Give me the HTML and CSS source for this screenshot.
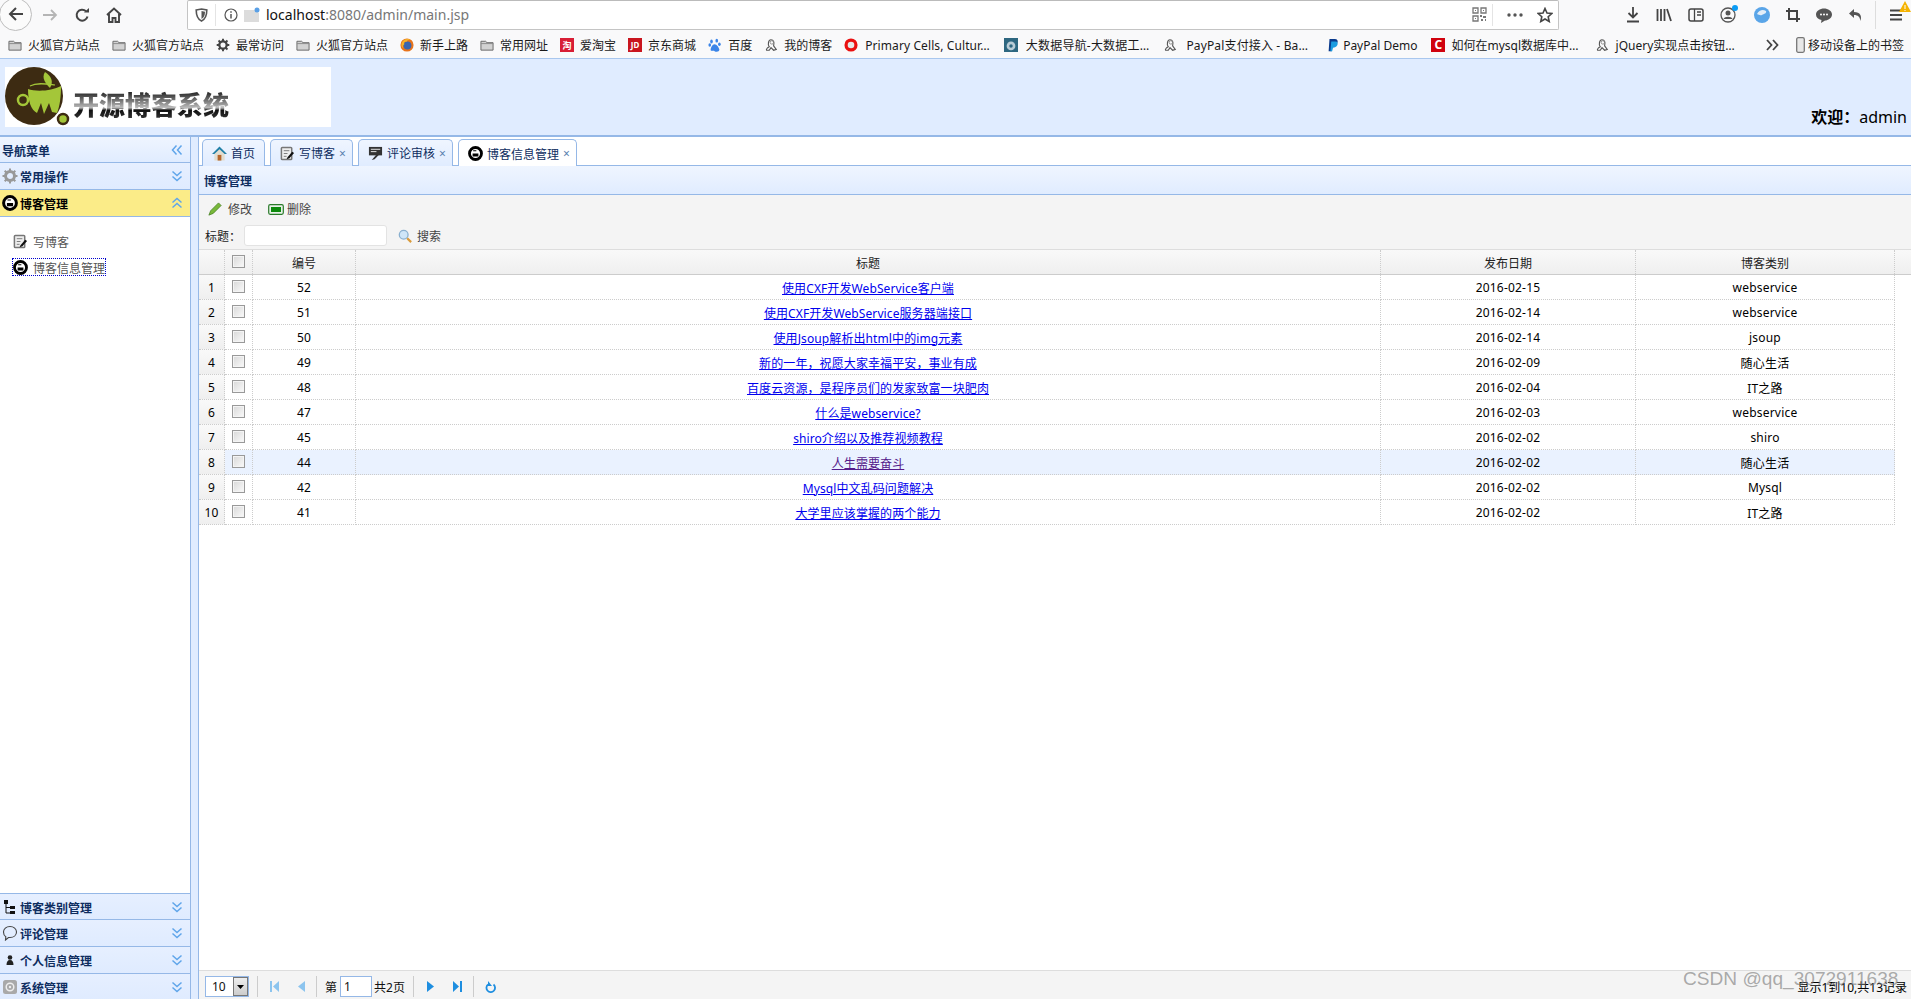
FILE: index.html
```html
<!DOCTYPE html>
<html lang="zh-CN">
<head>
<meta charset="utf-8">
<title>开源博客系统</title>
<link rel="stylesheet" href="styles.css">
</head>
<body>
<svg class="defs" width="0" height="0" aria-hidden="true">
  <symbol id="i-folder" viewBox="0 0 15 13"><path d="M1 2.500h5l1.500 1.500H14v8H1z" fill="#d2d2d2" stroke="#666"/><path d="M1 5h13" stroke="#888"/></symbol>
  <symbol id="i-gear" viewBox="0 0 16 16"><circle cx="8" cy="8" r="4.200" fill="none" stroke="#444" stroke-width="2.600"/><path d="M8 .8v3M8 12.200v3M.8 8h3M12.200 8h3M2.900 2.900l2.100 2.100M11 11l2.100 2.100M13.100 2.900L11 5M5 11l-2.100 2.100" stroke="#444" stroke-width="2.200"/></symbol>
  <symbol id="i-persona" viewBox="0 0 16 16"><path d="M3 14c-1-1 1-3 3-4C4 7 5 2 8 2c3 0 4 3 3 7l3 4-3 1-3-3-2 3z" fill="none" stroke="#555" stroke-width="1.300"/><circle cx="9" cy="5" r="2" fill="none" stroke="#888"/></symbol>
  <symbol id="i-blog" viewBox="0 0 16 16"><circle cx="8" cy="8" r="6.400" fill="#fff" stroke="#000" stroke-width="3"/><path d="M5.500 5h3.400M5.500 8.500h5v2.200h-5z" fill="#000" stroke="#000" stroke-width="1.200"/></symbol>
  <symbol id="i-write" viewBox="0 0 16 16"><rect x="1.500" y="1.500" width="11" height="13" rx="1" fill="#eee" stroke="#777" stroke-width="1.600"/><path d="M4 5h6M4 8h4M4 11h3" stroke="#777"/><path d="M8 12l5-6 2 1.500-5 5.500-3 1z" fill="#111"/></symbol>
  <symbol id="i-chev-d" viewBox="0 0 12 12"><path d="M1.500 1.500L6 5.500l4.500-4M1.500 6.500L6 10.500l4.500-4" fill="none" stroke="#5fa5ea" stroke-width="1.500"/></symbol>
  <symbol id="i-chev-u" viewBox="0 0 12 12"><path d="M1.500 5.500L6 1.500l4.500 4M1.500 10.500L6 6.500l4.500 4" fill="none" stroke="#5fa5ea" stroke-width="1.500"/></symbol>
  <symbol id="i-chev-l" viewBox="0 0 12 12"><path d="M5.500 1.500L1.500 6l4 4.500M10.500 1.500L6.500 6l4 4.500" fill="none" stroke="#5fa5ea" stroke-width="1.500"/></symbol>
</svg>

<div class="nav">
  <span class="back"><svg width="18" height="18" viewBox="0 0 18 18"><path d="M16 9H3M9 3L3 9l6 6" fill="none" stroke="#444" stroke-width="2"/></svg></span>
  <svg class="fwd" width="16" height="16" viewBox="0 0 16 16"><path d="M1 8h13M9 3l5 5-5 5" fill="none" stroke="#b5b5b5" stroke-width="1.800"/></svg>
  <svg class="reload" width="15" height="15" viewBox="0 0 15 15"><path d="M12.500 8.500A5.500 5.500 0 1 1 11 3.200" fill="none" stroke="#444" stroke-width="2"/><path d="M9 4.500h5V0z" fill="#444"/></svg>
  <svg class="home" width="16" height="16" viewBox="0 0 16 16"><path d="M1 8l7-6.500L15 8M3 7v8h3.500v-4h3v4H13V7" fill="none" stroke="#444" stroke-width="1.900"/></svg>
  <div class="urlbar">
    <svg class="u-shield" width="13" height="14" viewBox="0 0 13 14"><path d="M1.200 2l5.300-1 5.300 1c0 5-1 9-5.300 11C2.200 11 1.200 7 1.200 2z" fill="none" stroke="#555" stroke-width="1.600"/><path d="M6.500 3l3.500.7c0 3.500-1 5.800-3.500 7.200z" fill="#555"/></svg>
    <span class="u-div"></span>
    <svg class="u-info" width="14" height="14" viewBox="0 0 14 14"><circle cx="7" cy="7" r="6" fill="none" stroke="#555" stroke-width="1.200"/><path d="M7 6v4.500M7 3.300v1.500" stroke="#555" stroke-width="1.500"/></svg>
    <svg class="u-page" width="16" height="16" viewBox="0 0 16 16"><path d="M0 3h11l4 3v9H0z" fill="#dcdcdc"/><circle cx="13" cy="3" r="2.500" fill="#5aa0e6"/></svg>
    <span class="url"><b class="host">localhost</b>:8080/admin/main.jsp</span>
    <svg class="u-qr" width="15" height="15" viewBox="0 0 15 15"><path d="M1 1h5v5H1zM9 1h5v5H9zM1 9h5v5H1z" fill="none" stroke="#777" stroke-width="1.300"/><path d="M3 3h1v1H3zM11 3h1v1h-1zM3 11h1v1H3zM8 8h2v2H8zM11 9h3v2h-3zM9 12h2v2H9zM13 12h1v2h-1z" fill="#777"/></svg>
    <span class="u-div u-div2"></span>
    <svg class="u-dots" width="16" height="4" viewBox="0 0 16 4"><circle cx="2" cy="2" r="1.700" fill="#555"/><circle cx="8" cy="2" r="1.700" fill="#555"/><circle cx="14" cy="2" r="1.700" fill="#555"/></svg>
    <svg class="u-star" width="16" height="16" viewBox="0 0 16 16"><path d="M8 1.500l2 4.500 4.800.5-3.600 3.200 1 4.800L8 12l-4.200 2.500 1-4.800L1.200 6.500 6 6z" fill="none" stroke="#444" stroke-width="1.600"/></svg>
  </div>
  <div class="tools">
    <svg width="14" height="16" viewBox="0 0 14 16"><path d="M7 0v10M2.500 6L7 10.500 11.500 6M1 14.500h12" fill="none" stroke="#444" stroke-width="1.800"/></svg>
    <svg width="16" height="14" viewBox="0 0 16 14"><path d="M1.500 1v12M5 1v12M8.500 1v12M11 1l4 12" fill="none" stroke="#444" stroke-width="1.800"/></svg>
    <svg width="16" height="14" viewBox="0 0 16 14"><rect x="1" y="1" width="14" height="12" rx="2" fill="none" stroke="#444" stroke-width="1.500"/><path d="M6.500 1v12M9 4h4M9 7h4" stroke="#444" stroke-width="1.300"/></svg>
    <svg class="t-acc" width="18" height="18" viewBox="0 0 18 18"><circle cx="8" cy="10" r="7" fill="none" stroke="#555" stroke-width="1.300"/><circle cx="8" cy="8" r="2.500" fill="#555"/><path d="M3.500 14c1-3 8-3 9 0" fill="#555"/><circle cx="15" cy="3" r="3" fill="#0a9cf5"/></svg>
    <svg width="16" height="16" viewBox="0 0 16 16"><circle cx="8" cy="8" r="8" fill="#5aa5e8"/><path d="M3 7c2-4 6-5 9-3 1 2-2 3-4 4-2 .5-3 0-5-1z" fill="#e4eef8"/></svg>
    <svg width="14" height="14" viewBox="0 0 14 14"><path d="M3 0v11h11M0 3h11v11" fill="none" stroke="#444" stroke-width="2"/></svg>
    <svg width="16" height="15" viewBox="0 0 16 15"><path d="M8 .5c4 0 8 2.500 8 6s-4 6-7 6l-4 2.500 .5-3C2 11 0 9.500 0 6.500 0 3 4 .5 8 .5z" fill="#555"/><circle cx="5" cy="6.500" r="1" fill="#fff"/><circle cx="8" cy="6.500" r="1" fill="#fff"/><circle cx="11" cy="6.500" r="1" fill="#fff"/></svg>
    <svg width="15" height="15" viewBox="0 0 15 15"><path d="M6 1L1 5.500 6 10V7c4 0 6 2 6.500 6 1.500-5 0-9-6.500-9z" fill="#555"/></svg>
    <span class="t-div"></span>
    <span class="menu">
      <svg width="12" height="12" viewBox="0 0 12 12"><path d="M0 1.500h12M0 6h12M0 10.500h12" stroke="#444" stroke-width="1.800"/></svg>
      <svg class="warn" width="12" height="12" viewBox="0 0 12 12"><path d="M6 0l6 11H0z" fill="#f5b301"/><path d="M6 4v4M6 9v1" stroke="#fff"/></svg>
    </span>
  </div>
</div>

<div class="bookmarks">
  <span class="bm"><svg class="ic"><use href="#i-folder"/></svg>火狐官方站点</span>
  <span class="bm"><svg class="ic"><use href="#i-folder"/></svg>火狐官方站点</span>
  <span class="bm"><svg class="ic"><use href="#i-gear"/></svg>最常访问</span>
  <span class="bm"><svg class="ic"><use href="#i-folder"/></svg>火狐官方站点</span>
  <span class="bm"><svg class="ic" viewBox="0 0 16 16"><circle cx="8" cy="8" r="7.500" fill="#e8741c"/><circle cx="8.500" cy="8.500" r="4.500" fill="#3a66b0"/><path d="M2 6C3 2 8 0 12 2c-3 0-4 1-4 2-3 0-4 1-3 3-2 1-2 3-1 5C2 11 1 8 2 6z" fill="#f6b32a"/></svg>新手上路</span>
  <span class="bm"><svg class="ic"><use href="#i-folder"/></svg>常用网址</span>
  <span class="bm"><span class="sq sq-tao">淘</span>爱淘宝</span>
  <span class="bm"><span class="sq sq-jd">JD</span>京东商城</span>
  <span class="bm"><svg class="ic" viewBox="0 0 16 16"><g fill="#3a84e8"><ellipse cx="4" cy="4" rx="1.500" ry="2.200"/><ellipse cx="10" cy="3" rx="1.500" ry="2.200"/><ellipse cx="2" cy="8" rx="1.500" ry="2"/><ellipse cx="13" cy="7" rx="1.500" ry="2"/><path d="M7.500 7C10 7 13 11 13 13.500S9 16 7.500 15 3 16 3 13.500 5 7 7.500 7z"/></g></svg>百度</span>
  <span class="bm"><svg class="ic"><use href="#i-persona"/></svg>我的博客</span>
  <span class="bm bm-a"><svg class="ic" viewBox="0 0 16 16"><circle cx="8" cy="8" r="7.500" fill="#ea1010"/><circle cx="8" cy="8" r="3.800" fill="#e8e8e8"/></svg>Primary Cells, Cultur…</span>
  <span class="bm bm-b"><svg class="ic" viewBox="0 0 16 16"><rect width="16" height="16" fill="#2e6780"/><circle cx="8" cy="9" r="5" fill="#b9ccd6"/><circle cx="8" cy="9" r="2" fill="#2e6780"/></svg>大数据导航-大数据工…</span>
  <span class="bm bm-c"><svg class="ic"><use href="#i-persona"/></svg>PayPal支付接入 - Ba…</span>
  <span class="bm bm-d"><svg class="ic" viewBox="0 0 16 16"><path d="M4 1h6c3 0 4 2 3 4.500S9 8.500 7.500 8.500L6.500 15H3z" fill="#0a3a8c"/><path d="M6 4h5c2 0 3 2 2 4s-3 3-5 3l-1 4H5z" fill="#1a9ce0"/></svg>PayPal Demo</span>
  <span class="bm bm-e"><span class="sq sq-c">C</span>如何在mysql数据库中…</span>
  <span class="bm bm-f"><svg class="ic"><use href="#i-persona"/></svg>jQuery实现点击按钮…</span>
  <span class="bm-end">
    <svg class="more" width="13" height="12" viewBox="0 0 13 12"><path d="M1 1l4.500 5L1 11M7 1l4.500 5L7 11" fill="none" stroke="#444" stroke-width="1.800"/></svg>
    <span class="bm bm-phone"><svg class="phone" width="9" height="16" viewBox="0 0 9 16"><rect x=".7" y=".7" width="7.600" height="14.600" rx="1.500" fill="#e8e8e8" stroke="#777" stroke-width="1.300"/></svg>移动设备上的书签</span>
  </span>
</div>

<header class="top">
  <div class="logo">
    <svg class="logo-mark" width="66" height="60" viewBox="0 0 66 60">
      <circle cx="29" cy="29" r="29" fill="#3d2b12"/>
      <circle cx="58" cy="52" r="5" fill="#a4c639" stroke="#3d2b12" stroke-width="2.500"/>
      <path d="M23 22c8 3 24 2 33-3 0 10-1 20-4 27l-5-1-3-9-5 11-3-11-4 10c-6-3-9-12-9-24z" fill="#a4c639"/>
      <path d="M25 19c7-4 17-2 25-1" fill="none" stroke="#a4c639" stroke-width="1.200"/>
      <circle cx="18" cy="33" r="5" fill="none" stroke="#a4c639" stroke-width="2.500"/>
      <path d="M40 5c6 4 9 9 5 16-4-4-9-10-5-16z" fill="#a4c639"/>
    </svg>
    <span class="logo-text">开源博客系统</span>
  </div>
  <div class="welcome"><strong>欢迎：</strong>admin</div>
</header>

<div class="layout">
  <aside class="west">
    <div class="acc acc-title"><span class="acc-t">导航菜单</span><svg class="chev"><use href="#i-chev-l"/></svg></div>
    <div class="acc"><svg class="acc-i" viewBox="0 0 16 16"><circle cx="8" cy="8" r="4.500" fill="none" stroke="#999" stroke-width="3"/><path d="M8 .5v3M8 12.500v3M.5 8h3M12.500 8h3M2.700 2.700l2 2M11.300 11.300l2 2M13.300 2.700l-2 2M4.700 11.300l-2 2" stroke="#999" stroke-width="2"/></svg><span class="acc-t">常用操作</span><svg class="chev"><use href="#i-chev-d"/></svg></div>
    <div class="acc acc-on"><svg class="acc-i"><use href="#i-blog"/></svg><span class="acc-t">博客管理</span><svg class="chev"><use href="#i-chev-u"/></svg></div>
    <div class="acc-body">
      <div class="link"><svg class="link-i"><use href="#i-write"/></svg>写博客</div>
      <div class="link link-on"><svg class="link-i"><use href="#i-blog"/></svg>博客信息管理</div>
    </div>
    <div class="acc acc-first"><svg class="acc-i" viewBox="0 0 16 16"><path d="M2 1h4v4H2zM8 7h5v3H8zM8 12h5v3H8z" fill="#111"/><path d="M4 5v9h4M4 8.500h4" stroke="#111" fill="none"/></svg><span class="acc-t">博客类别管理</span><svg class="chev"><use href="#i-chev-d"/></svg></div>
    <div class="acc"><svg class="acc-i" viewBox="0 0 16 16"><path d="M8 1.500c3.800 0 6.500 2.300 6.500 5.500S11.800 12.500 8 12.500H6.500L3.500 15l.3-3.300C2 10.700 1.500 9 1.500 7 1.500 3.800 4.200 1.500 8 1.500z" fill="none" stroke="#444" stroke-width="1.100"/></svg><span class="acc-t">评论管理</span><svg class="chev"><use href="#i-chev-d"/></svg></div>
    <div class="acc"><svg class="acc-i" viewBox="0 0 16 16"><circle cx="8" cy="5.500" r="2.300" fill="#222"/><path d="M4.500 13c0-3 1-5 3.500-5s3.500 2 3.500 5z" fill="#222"/></svg><span class="acc-t">个人信息管理</span><svg class="chev"><use href="#i-chev-d"/></svg></div>
    <div class="acc"><svg class="acc-i" viewBox="0 0 16 16"><rect x="1" y="1" width="14" height="14" rx="2.500" fill="#a9a9a9"/><circle cx="8" cy="8" r="3.800" fill="none" stroke="#eee" stroke-width="1.500"/><circle cx="8" cy="8" r="1.200" fill="#eee"/></svg><span class="acc-t">系统管理</span><svg class="chev"><use href="#i-chev-d"/></svg></div>
  </aside>
  <div class="split"></div>
  <main class="center">
    <div class="tabs">
      <div class="tab"><svg class="tab-i" viewBox="0 0 16 16"><path d="M8 1L0 8.500h2.500V15.500h11V8.500H16z" fill="#e2ddcf"/><path d="M8 .5L0 8.500h2.500L8 3.500l5.500 5H16z" fill="#1f7fa8"/><rect x="6" y="9.500" width="4" height="6" fill="#b5652a"/></svg>首页</div>
      <div class="tab"><svg class="tab-i"><use href="#i-write"/></svg>写博客<span class="x">×</span></div>
      <div class="tab"><svg class="tab-i" viewBox="0 0 16 16"><rect x="1" y="1" width="14" height="9" fill="#333"/><path d="M3 3.500h10M3 6h6" stroke="#eee"/><path d="M9 9l-5 6 3-1 5-5z" fill="#333"/></svg>评论审核<span class="x">×</span></div>
      <div class="tab tab-on"><svg class="tab-i"><use href="#i-blog"/></svg>博客信息管理<span class="x">×</span></div>
    </div>
    <div class="panel-head">博客管理</div>
    <div class="toolbar">
      <div class="tb-row">
        <span class="btn"><svg class="btn-i" viewBox="0 0 16 16"><path d="M1 15l2-5L12 1l3 3-9 9z" fill="#79b83a" stroke="#3f7a1c" stroke-width=".8"/></svg>修改</span>
        <span class="btn btn-del"><svg class="btn-del-i" width="16" height="11" viewBox="0 0 16 11"><rect x=".7" y=".7" width="14.600" height="9.600" rx="1.500" fill="#e8f2e8" stroke="#2a7a2a" stroke-width="1.200"/><rect x="3" y="3" width="10" height="5" fill="#0c8a0c"/></svg>删除</span>
      </div>
      <div class="tb-row tb-search">
        <span class="label">标题：</span>
        <span class="input"></span>
        <span class="btn btn-s"><svg class="btn-i" viewBox="0 0 16 16"><circle cx="6.500" cy="6.500" r="5" fill="#cfe6f8" stroke="#8ab0cf" stroke-width="1.500"/><path d="M10.500 10.500l4.500 4.500" stroke="#d99a3a" stroke-width="2.500"/></svg>搜索</span>
      </div>
    </div>
    <div class="grid-head">
      <table class="grid">
        <colgroup><col class="c-num"><col class="c-ck"><col class="c-id"><col class="c-title"><col class="c-date"><col class="c-cat"></colgroup>
        <tr class="hr"><th></th><th><span class="ck"></span></th><th>编号</th><th>标题</th><th>发布日期</th><th>博客类别</th></tr>
      </table>
    </div>
    <table class="grid grid-body">
      <colgroup><col class="c-num"><col class="c-ck"><col class="c-id"><col class="c-title"><col class="c-date"><col class="c-cat"></colgroup>
      <tr><td class="num">1</td><td><span class="ck"></span></td><td>52</td><td><a href="#">使用CXF开发WebService客户端</a></td><td>2016-02-15</td><td>webservice</td></tr>
      <tr><td class="num">2</td><td><span class="ck"></span></td><td>51</td><td><a href="#">使用CXF开发WebService服务器端接口</a></td><td>2016-02-14</td><td>webservice</td></tr>
      <tr><td class="num">3</td><td><span class="ck"></span></td><td>50</td><td><a href="#">使用Jsoup解析出html中的img元素</a></td><td>2016-02-14</td><td>jsoup</td></tr>
      <tr><td class="num">4</td><td><span class="ck"></span></td><td>49</td><td><a href="#">新的一年，祝愿大家幸福平安，事业有成</a></td><td>2016-02-09</td><td>随心生活</td></tr>
      <tr><td class="num">5</td><td><span class="ck"></span></td><td>48</td><td><a href="#">百度云资源，是程序员们的发家致富一块肥肉</a></td><td>2016-02-04</td><td>IT之路</td></tr>
      <tr><td class="num">6</td><td><span class="ck"></span></td><td>47</td><td><a href="#">什么是webservice?</a></td><td>2016-02-03</td><td>webservice</td></tr>
      <tr><td class="num">7</td><td><span class="ck"></span></td><td>45</td><td><a href="#">shiro介绍以及推荐视频教程</a></td><td>2016-02-02</td><td>shiro</td></tr>
      <tr class="hover"><td class="num">8</td><td><span class="ck"></span></td><td>44</td><td><a class="seen" href="#">人生需要奋斗</a></td><td>2016-02-02</td><td>随心生活</td></tr>
      <tr><td class="num">9</td><td><span class="ck"></span></td><td>42</td><td><a href="#">Mysql中文乱码问题解决</a></td><td>2016-02-02</td><td>Mysql</td></tr>
      <tr><td class="num">10</td><td><span class="ck"></span></td><td>41</td><td><a href="#">大学里应该掌握的两个能力</a></td><td>2016-02-02</td><td>IT之路</td></tr>
    </table>
    <div class="pager">
      <span class="pg-select"><span class="pg-val">10</span><span class="pg-arrow"><svg width="7" height="4" viewBox="0 0 7 4"><path d="M0 0h7L3.500 4z" fill="#000"/></svg></span></span>
      <span class="pg-sep"></span>
      <svg class="pg-first" width="9" height="11" viewBox="0 0 9 11"><path d="M0 0h2v11H0zM9 0v11L3 5.500z" fill="#8cc4ee"/></svg>
      <svg class="pg-prev" width="7" height="11" viewBox="0 0 7 11"><path d="M7 0v11L0 5.500z" fill="#8cc4ee"/></svg>
      <span class="pg-sep pg-sep-2"></span>
      <span class="pg-t">第</span>
      <span class="pg-input">1</span>
      <span class="pg-t">共2页</span>
      <span class="pg-sep"></span>
      <svg class="pg-next" width="7" height="11" viewBox="0 0 7 11"><path d="M0 0v11l7-5.500z" fill="#1e8ee0"/></svg>
      <svg class="pg-last" width="9" height="11" viewBox="0 0 9 11"><path d="M0 0v11l6-5.500zM7 0h2v11H7z" fill="#1e8ee0"/></svg>
      <span class="pg-sep pg-sep-3"></span>
      <svg class="pg-ref" width="11" height="12" viewBox="0 0 11 12"><path d="M8.500 3.500a4.300 4.300 0 1 1-5.500 0" fill="none" stroke="#1e8ee0" stroke-width="1.800"/><path d="M3 0v5h4z" fill="#1e8ee0"/></svg>
      <span class="pg-info">显示1到10,共13记录</span>
    </div>
  </main>
</div>
<div class="watermark">CSDN @qq_3072911638</div>
</body>
</html>
```

FILE: styles.css
```css
* { box-sizing: border-box; }
html, body { margin: 0; padding: 0; }
body {
  position: relative;
  width: 1911px;
  height: 999px;
  overflow: hidden;
  display: flex;
  flex-direction: column;
  background: #fff;
  color: #111;
  font: 12px "Noto Sans", "Noto Sans CJK SC", sans-serif;
}
.defs { position: absolute; }

/* browser toolbar */
.nav { height: 30px; flex: none; display: flex; align-items: center; background: #f9f9fa; position: relative; }
.back { width: 33px; height: 33px; margin: -2px 0 0 -1px; flex: none; border: 1px solid #bdbdbd; border-radius: 50%; background: #fbfbfb; display: flex; align-items: center; justify-content: center; }
.fwd { margin-left: 10px; flex: none; }
.reload { margin-left: 17px; flex: none; }
.home { margin-left: 16px; flex: none; }
.urlbar { width: 1372px; height: 30px; margin: -1px 0 0 65px; flex: none; border: 1px solid #c4c4c4; border-top-color: #bbb; border-radius: 2px; background: #fff; display: flex; align-items: center; }
.u-shield { margin-left: 7px; flex: none; }
.u-div { width: 1px; height: 22px; background: #e4e4e4; margin-left: 7px; flex: none; }
.u-info { margin-left: 8px; flex: none; }
.u-page { margin-left: 6px; flex: none; }
.url { margin-left: 6px; font-size: 14px; color: #777; flex: 1; white-space: nowrap; }
.host { font-weight: 400; color: #111; }
.u-qr { flex: none; }
.u-div2 { margin-left: 5px; }
.u-dots { margin-left: 14px; flex: none; }
.u-star { margin: 0 5px 0 14px; flex: none; }
.tools { flex: 1; display: flex; align-items: center; gap: 16px; padding-left: 67px; }
.tools svg { flex: none; }
.t-acc { margin-top: -3px; }
.t-div { width: 1px; height: 28px; background: #ddd; margin-left: -4px; }
.menu { position: relative; display: block; margin-left: -2px; height: 12px; width: 12px; }
.menu svg { display: block; }
.warn { position: absolute; left: 9px; top: -8px; }

/* bookmarks */
.bookmarks { height: 28px; flex: none; display: flex; align-items: center; gap: 12px; padding: 2px 7px 0 8px; background: #f9f9fa; white-space: nowrap; }
.bm { display: flex; align-items: center; gap: 6px; flex: none; color: #1a1a1a; }
.bm-a { gap: 7px; letter-spacing: .1px; }
.bm-b { gap: 8px; margin-left: 2px; letter-spacing: .2px; }
.bm-c { gap: 9px; margin-left: 2px; letter-spacing: .15px; }
.bm-d { gap: 3px; margin-left: 6px; }
.bm-e { gap: 6px; margin-left: 2px; }
.bm-f { gap: 7px; margin-left: 4px; }
.ic { width: 14px; height: 14px; flex: none; display: block; }
.sq { width: 14px; height: 14px; flex: none; display: flex; align-items: center; justify-content: center; color: #fff; font-size: 9px; font-weight: 700; line-height: 1; }
.sq-tao { background: #d81e35; }
.sq-jd { background: #c9151e; font-size: 8px; }
.sq-c { background: #d0020e; font-size: 12px; }
.bm-end { display: flex; align-items: center; margin-left: auto; gap: 17px; }
.bm-phone { gap: 3px; }
.more, .phone { flex: none; }

/* page header */
.top { height: 79px; flex: none; display: flex; justify-content: space-between; background: #e0ecff; border-top: 1px solid #a9c7ee; border-bottom: 2px solid #95b8e7; }
.logo { width: 326px; height: 60px; margin: 8px 0 0 5px; background: #fff; display: flex; }
.logo-mark { flex: none; }
.logo-text { margin: 23px 0 0 2px; font-size: 26px; line-height: 30px; font-weight: 900; background: linear-gradient(#111 0, #bbb 48%, #111 55%, #555 100%); -webkit-background-clip: text; background-clip: text; color: transparent; white-space: nowrap; }
.welcome { align-self: flex-end; margin: 0 4px 5px 0; font-size: 16px; line-height: 26px; color: #000; font-family: "Noto Sans", "Noto Sans CJK TC", sans-serif; }
.welcome strong { font-weight: 700; }

/* west */
.layout { flex: 1; display: flex; min-height: 0; }
.west { width: 191px; flex: none; display: flex; flex-direction: column; border-right: 1px solid #95b8e7; background: #fff; }
.split { width: 7px; flex: none; background: #e0ecff; }
.acc { height: 27px; flex: none; display: flex; align-items: center; padding-left: 2px; border-bottom: 1px solid #95b8e7; background: linear-gradient(#e6efff, #dfebff); }
.acc-title { height: 26px; background: linear-gradient(#eff5ff, #e0ecff); }
.acc-on { background: #fbec88; }
.acc-i { width: 16px; height: 16px; flex: none; margin-right: 2px; display: block; }
.acc-t { flex: 1; padding-top: 2px; font-weight: 700; color: #0e2d5f; }
.acc-on .acc-t { color: #000; }
.chev { width: 12px; height: 12px; flex: none; margin-right: 7px; display: block; }
.acc-body { height: 676px; flex: none; padding: 15px 0 0 12px; }
.acc-first { border-top: 1px solid #95b8e7; }
.link { display: flex; align-items: center; height: 18px; margin-bottom: 8px; color: #555; width: 94px; padding-top: 1px; }
.link-i { width: 15px; height: 15px; flex: none; margin: 0 5px 0 1px; display: block; }
.link-on { outline: 1px dotted #00c; outline-offset: -1px; }

/* center */
.center { flex: 1; min-width: 0; display: flex; flex-direction: column; border-left: 1px solid #95b8e7; }
.tabs { height: 29px; flex: none; display: flex; gap: 5px; padding: 2px 0 0 3px; background: #fff; border-bottom: 1px solid #95b8e7; color: #0e2d5f; }
.tab { height: 27px; display: flex; align-items: center; padding: 0 9px; border: 1px solid #95b8e7; border-bottom: 0; border-radius: 5px 5px 0 0; background: linear-gradient(#eff5ff, #e0ecff); white-space: nowrap; }
.tab-on { background: #fff; color: #0e2d5f; height: 28px; margin-bottom: -1px; }
.tab-i { width: 15px; height: 15px; flex: none; margin-right: 4px; display: block; }
.x { margin: 0 -3px 0 4px; font-size: 12px; color: #5a7fb0; width: 7px; }
.panel-head { height: 29px; flex: none; display: flex; align-items: center; padding: 2px 0 0 5px; font-weight: 700; color: #0e2d5f; background: linear-gradient(#eff5ff, #e0ecff); border-bottom: 1px solid #95b8e7; }
.toolbar { height: 55px; flex: none; background: #f4f4f4; padding-left: 6px; color: #444; border-bottom: 1px solid #ddd; }
.tb-row { display: flex; align-items: center; height: 28px; }
.tb-search { height: 25px; }
.btn { display: flex; align-items: center; flex: none; }
.btn-i { width: 14px; height: 14px; margin: 0 6px 0 3px; flex: none; display: block; }
.btn-del { margin-left: 16px; }
.btn-del-i { margin-right: 3px; flex: none; display: block; }
.label { color: #222; width: 39px; flex: none; font-family: "Noto Sans CJK TC", sans-serif; }
.input { width: 143px; height: 21px; flex: none; background: #fff; border: 1px solid #e3e3e3; border-radius: 3px; }
.btn-s { margin-left: 10px; }
.btn-s .btn-i { margin: 0 5px 0 1px; }

/* grid */
.grid-head { flex: none; height: 25px; background: linear-gradient(#f9f9f9, #efefef); border-bottom: 1px solid #ccc; }
.grid { width: 1696px; table-layout: fixed; border-collapse: separate; border-spacing: 0; color: #000; }
.c-num { width: 26px; } .c-ck { width: 28px; } .c-id { width: 103px; } .c-title { width: 1025px; } .c-date { width: 255px; } .c-cat { width: 259px; }
.grid th, .grid td { height: 25px; padding: 1px 0 0; text-align: center; border-right: 1px dotted #ccc; font-weight: 400; vertical-align: middle; white-space: nowrap; }
.grid th { height: 24px; color: #222; }
.grid td { border-bottom: 1px dotted #ccc; letter-spacing: .2px; }
.grid td.num { background: linear-gradient(#f9f9f9, #efefef); border-right-color: #ccc; }
.grid-body { flex: none; }
.hover td { background: #eaf2ff; }
.ck { display: block; width: 13px; height: 13px; margin: -3px 0 0 7px; border: 1px solid #999; background: linear-gradient(135deg, #d8d8d8, #fafafa); box-shadow: inset 0 0 0 1px #f4f4f4; }
a { color: #00e; text-decoration: underline; letter-spacing: .1px; }
a.seen { color: #551a8b; }

/* pager */
.pager { margin-top: auto; height: 29px; flex: none; display: flex; align-items: center; padding: 3px 4px 0 6px; background: #f4f4f4; border-top: 1px solid #ddd; color: #111; }
.pg-select { width: 44px; height: 21px; flex: none; display: flex; border: 1px solid #95b8e7; background: #fff; }
.pg-val { flex: 1; padding-left: 6px; line-height: 19px; }
.pg-arrow { width: 15px; flex: none; display: flex; align-items: center; justify-content: center; background: linear-gradient(#eee, #ccc); border: 1px solid #777; }
.pg-sep { width: 1px; height: 21px; flex: none; background: #ccc; margin: 0 8px; }
.pg-first { margin: 0 19px 0 4px; flex: none; }
.pg-prev { flex: none; }
.pg-sep-2 { margin: 0 8px 0 11px; }
.pg-t { flex: none; }
.pg-input { width: 32px; height: 21px; flex: none; margin: 0 2px 0 3px; padding-left: 3px; line-height: 19px; border: 1px solid #95b8e7; background: #fff; }
.pg-next { margin: 0 19px 0 5px; flex: none; }
.pg-last { flex: none; }
.pg-sep-3 { margin: 0 11px; }
.pg-ref { flex: none; }
.pg-info { margin-left: auto; flex: none; color: #000; }

.watermark { position: absolute; left: 1683px; top: 967px; font: 19.100px/24px "Liberation Sans", sans-serif; color: rgba(120,120,120,.62); white-space: nowrap; }
```
